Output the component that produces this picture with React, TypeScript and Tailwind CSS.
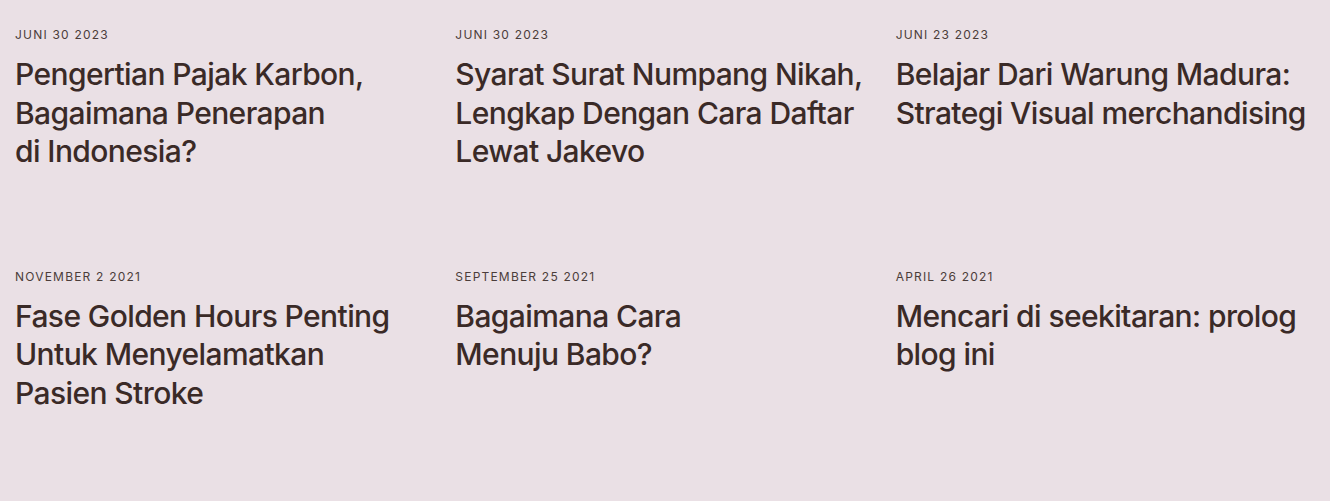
import React from 'react';

const posts = [
  { date: 'Juni 30 2023', lines: ['Pengertian Pajak Karbon,', 'Bagaimana Penerapan', 'di Indonesia?'] },
  { date: 'Juni 30 2023', lines: ['Syarat Surat Numpang Nikah,', 'Lengkap Dengan Cara Daftar', 'Lewat Jakevo'] },
  { date: 'Juni 23 2023', lines: ['Belajar Dari Warung Madura:', 'Strategi Visual merchandising'] },
  { date: 'November 2 2021', lines: ['Fase Golden Hours Penting', 'Untuk Menyelamatkan', 'Pasien Stroke'] },
  { date: 'September 25 2021', lines: ['Bagaimana Cara', 'Menuju Babo?'] },
  { date: 'April 26 2021', lines: ['Mencari di seekitaran: prolog', 'blog ini'] },
];

const App = () => {
  return (
    <div className="min-h-[501px] bg-[#eae0e5] px-[15px] pt-[27px] font-['Inter',sans-serif] text-[#3a2a27]">
      <div className="grid grid-cols-3 gap-x-[21px] gap-y-[98px]">
        {posts.map((post, i) => (
          <a key={i} href="#" className="block">
            <p className="text-[12px] leading-4 uppercase tracking-[0.1em] text-[#4b3d3a]">{post.date}</p>
            <h2 className="mt-[12px] text-[30px] leading-[38.5px] font-medium tracking-[-0.02em]">
              {post.lines.map((line, j) => (
                <span key={j} className="block">
                  {line}
                </span>
              ))}
            </h2>
          </a>
        ))}
      </div>
    </div>
  );
};

export default App;
